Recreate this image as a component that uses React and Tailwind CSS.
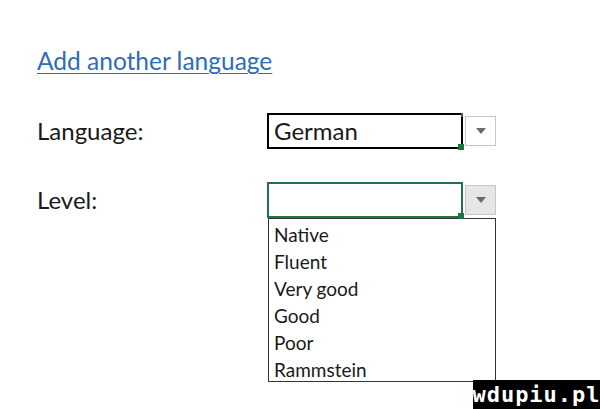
import React from 'react';

const levels = ['Native', 'Fluent', 'Very good', 'Good', 'Poor', 'Rammstein'];

function Arrow() {
  return (
    <svg width="10" height="6" viewBox="0 0 10 6">
      <path d="M0 0 L10 0 L5 6 Z" fill="#6b6b6b" />
    </svg>
  );
}

function DropButton({ pressed }) {
  return (
    <div
      className={`ml-[2px] flex h-[30px] w-[31px] items-center justify-center border border-[#c6c6c6] ${
        pressed ? 'bg-[#e6e6e6]' : 'bg-white'
      }`}
    >
      <Arrow />
    </div>
  );
}

export default function App() {
  return (
    <div
      className="relative h-[409px] w-[600px] overflow-hidden bg-white text-[#1a1a1a]"
      style={{ fontFamily: 'Lato, "Open Sans", sans-serif' }}
    >
      <div className="pl-[37px] pt-[46px]">
        <a className="block h-[30px] text-[24.5px] leading-[30px] text-[#2e6db4] underline decoration-1 underline-offset-[3px]">
          Add another language
        </a>

        {/* Language row */}
        <div className="mt-[37px] flex items-center">
          <div className="w-[230px] text-[24px] leading-[30px]">Language:</div>
          <div className="relative flex h-[36px] w-[196px] items-center border-2 border-black pl-[5px] text-[24px]">
            German
            <div className="absolute -right-[3px] -bottom-[3px] h-[6px] w-[6px] bg-[#217346]" />
            <div className="absolute -right-[2px] -top-[2px] h-[4px] w-[2px] bg-[#217346]" />
          </div>
          <DropButton />
        </div>

        {/* Level row */}
        <div className="mt-[33px] flex items-start">
          <div className="mt-[3px] w-[230px] text-[24px] leading-[30px]">Level:</div>
          <div className="relative">
            <div className="flex items-center">
              <div className="relative h-[36px] w-[196px] border-2 border-[#217346]">
                <div className="absolute -right-[3px] -bottom-[3px] h-[6px] w-[6px] bg-[#217346]" />
              </div>
              <DropButton pressed />
            </div>
            <div className="ml-[1px] flex h-[164px] w-[228px] flex-col border border-[#333] bg-white pl-[5px] pt-[2px] text-[19px] leading-[27px]">
              {levels.map((l) => (
                <div key={l}>{l}</div>
              ))}
            </div>
          </div>
        </div>
      </div>

      <div
        className="absolute bottom-0 right-0 flex h-[29px] w-[127px] items-center justify-center bg-black text-[22px] font-bold tracking-[1px] text-white"
        style={{ fontFamily: '"DejaVu Sans Mono", monospace' }}
      >
        wdupiu.pl
      </div>
    </div>
  );
}
